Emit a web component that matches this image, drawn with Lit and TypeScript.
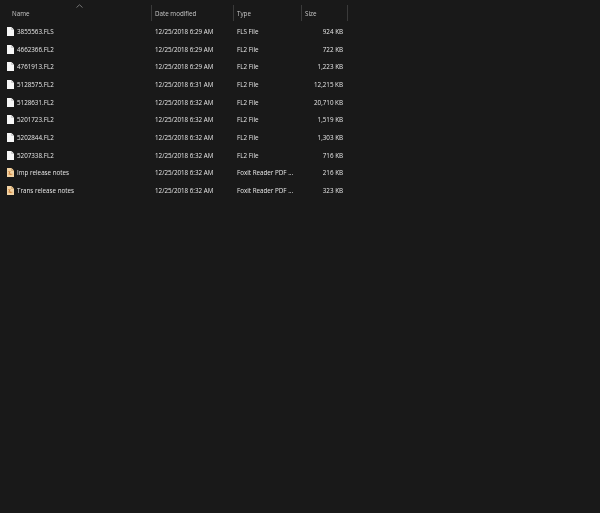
import { LitElement, html, css, svg } from "lit";
import { customElement } from "lit/decorators.js";

const files = [
  ["3855563.FLS", "12/25/2018 6:29 AM", "FLS File", "924 KB", 0],
  ["4662366.FL2", "12/25/2018 6:29 AM", "FL2 File", "722 KB", 0],
  ["4761913.FL2", "12/25/2018 6:29 AM", "FL2 File", "1,223 KB", 0],
  ["5128575.FL2", "12/25/2018 6:31 AM", "FL2 File", "12,215 KB", 0],
  ["5128631.FL2", "12/25/2018 6:32 AM", "FL2 File", "20,710 KB", 0],
  ["5201723.FL2", "12/25/2018 6:32 AM", "FL2 File", "1,519 KB", 0],
  ["5202844.FL2", "12/25/2018 6:32 AM", "FL2 File", "1,303 KB", 0],
  ["5207338.FL2", "12/25/2018 6:32 AM", "FL2 File", "716 KB", 0],
  ["Imp release notes", "12/25/2018 6:32 AM", "Foxit Reader PDF ...", "216 KB", 1],
  ["Trans release notes", "12/25/2018 6:32 AM", "Foxit Reader PDF ...", "323 KB", 1],
] as const;

const plain = svg`<path d="M0 0H4.5L7 2.5V9H0Z" fill="#f6f6f6"/><path d="M4.5 0V2.5H7" fill="none" stroke="#a8a8a8" stroke-width=".5"/>`;
const pdf = svg`<path d="M0 0H4.5L7 2.5V9H0Z" fill="#f3d3a3"/><path d="M4.5 0V2.5H7" fill="none" stroke="#b98c50" stroke-width=".5"/><path d="M1.6 3L3.8 7.2M5.4 6.3H1.8L3.2 3" fill="none" stroke="#cf8238" stroke-width=".8"/>`;

@customElement("app-root")
export class AppRoot extends LitElement {
  static styles = css`
    :host {
      display: block;
      width: 600px;
      height: 513px;
      background: #191919;
      overflow: hidden;
      font-family: "Open Sans", "Noto Sans", sans-serif;
      font-size: 6.25px;
      color: #e6e6e6;
    }
    .wrap {
      filter: blur(0.25px);
    }
    .cols {
      display: grid;
      grid-template-columns: 151px 82px 68px 47px;
    }
    .head {
      height: 22.5px;
      color: #c8c8c8;
      position: relative;
    }
    .hcell {
      display: flex;
      align-items: center;
      height: 16px;
      margin-top: 5px;
      padding-left: 3px;
      border-left: 1px solid #3a3a3a;
    }
    .hcell.name {
      border-left: none;
      padding-left: 12px;
    }
    .hcell.last {
      border-right: 1px solid #3a3a3a;
    }
    .sort {
      position: absolute;
      left: 76px;
      top: 4px;
      width: 7px;
      height: 4px;
    }
    .rows {
      display: flex;
      flex-direction: column;
    }
    .row {
      height: 17.7px;
      align-items: center;
    }
    .name {
      display: flex;
      align-items: center;
      gap: 3px;
      padding-left: 7px;
    }
    .name svg {
      width: 7px;
      height: 9px;
      flex: none;
    }
    .date {
      padding-left: 4px;
    }
    .type {
      padding-left: 4px;
    }
    .size {
      text-align: right;
      padding-right: 5px;
    }
  `;

  render() {
    return html`
      <div class="wrap">
        <div class="cols head">
          <div class="hcell name">Name</div>
          <div class="hcell">Date modified</div>
          <div class="hcell">Type</div>
          <div class="hcell last">Size</div>
          <svg class="sort" viewBox="0 0 7 4"><path d="M.5 3.5L3.5 .8L6.5 3.5" fill="none" stroke="#8a8a8a" stroke-width=".8"/></svg>
        </div>
        <div class="rows">
          ${files.map(
            ([n, d, t, s, p]) => html`
              <div class="cols row">
                <div class="name"><svg viewBox="0 0 7 9">${p ? pdf : plain}</svg><span>${n}</span></div>
                <div class="date">${d}</div>
                <div class="type">${t}</div>
                <div class="size">${s}</div>
              </div>
            `
          )}
        </div>
      </div>
    `;
  }
}
